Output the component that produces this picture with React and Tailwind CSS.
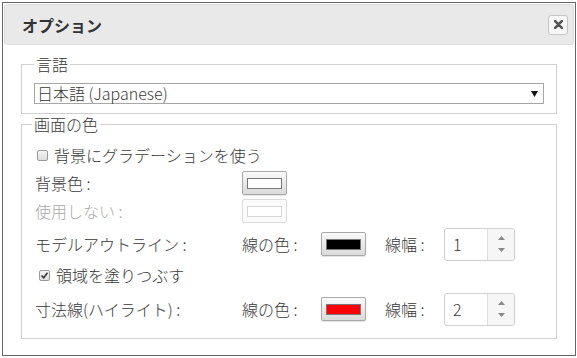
import React from 'react';

const font = { fontFamily: '"Noto Sans CJK JP", "Liberation Sans", sans-serif' };

function Checkbox({ checked }) {
  return (
    <span className="w-[11px] h-[11px] border border-[#9a9a9a] rounded-[2px] bg-linear-to-b from-[#f4f4f4] to-[#dedede] flex items-center justify-center shrink-0">
      {checked && (
        <svg width="9" height="9" viewBox="0 0 9 9">
          <path d="M1.5 4.5 L3.7 6.8 L7.5 1.8" fill="none" stroke="#333" strokeWidth="1.6" />
        </svg>
      )}
    </span>
  );
}

function ColorButton({ color, disabled }) {
  return (
    <button
      type="button"
      className={
        disabled
          ? 'w-[45px] h-[24px] border border-[#dcdcdc] rounded-[2px] bg-[#fbfbfb] flex items-center justify-center'
          : 'w-[45px] h-[24px] border border-[#a9a9a9] rounded-[2px] bg-linear-to-b from-[#fafafa] to-[#dadada] flex items-center justify-center shadow-[0_1px_1px_rgba(0,0,0,0.12)]'
      }
    >
      <span
        className={disabled ? 'w-[35px] h-[11px] border border-[#d6d6d6]' : 'w-[35px] h-[11px] border border-[#777]'}
        style={{ background: color }}
      />
    </button>
  );
}

function Spinner({ value }) {
  return (
    <div className="w-[71px] h-[33px] border border-[#cfcfcf] rounded-[3px] flex bg-white">
      <div className="flex-1 flex items-center pl-[8px] text-[16px]">{value}</div>
      <div className="w-[27px] border-l border-[#dedede] bg-[#f6f6f6] flex flex-col items-center justify-center gap-[8px] rounded-r-[3px]">
        <svg width="7" height="4" viewBox="0 0 7 4"><path d="M0 4 L3.5 0 L7 4 Z" fill="#888" /></svg>
        <svg width="7" height="4" viewBox="0 0 7 4"><path d="M0 0 L3.5 4 L7 0 Z" fill="#888" /></svg>
      </div>
    </div>
  );
}

function LineRow({ label, color, width }) {
  return (
    <div className="h-[34px] flex items-center">
      <span className="w-[207px]">{label}</span>
      <span className="w-[79px]">線の色 :</span>
      <ColorButton color={color} />
      <span className="ml-[19px] w-[59px]">線幅 :</span>
      <Spinner value={width} />
    </div>
  );
}

export default function App() {
  return (
    <div className="w-[577px] h-[358px] bg-white" style={font}>
      <div className="absolute left-[2px] top-[2px] w-[574px] h-[354px] border border-[#666] bg-white">
        <div className="h-[41px] mx-[1px] mt-[1px] bg-[#e9e9e9] border border-[#dddddd] rounded-[3px] flex items-center justify-between pl-[17px] pr-[5px]">
          <span className="text-[16px] font-bold text-[#333] leading-[20px]">オプション</span>
          <button
            type="button"
            className="w-[20px] h-[20px] border border-[#c5c5c5] rounded-[3px] bg-[#f6f6f6] flex items-center justify-center"
          >
            <svg width="9" height="9" viewBox="0 0 9 9">
              <path d="M1.2 1.2 L7.8 7.8 M7.8 1.2 L1.2 7.8" stroke="#555" strokeWidth="2.6" strokeLinecap="round" />
            </svg>
          </button>
        </div>

        <div className="px-[18px] pt-[9px] text-[#383838] text-[16px] leading-[20px] font-light">
          <fieldset className="border border-[#d0d0d0] px-[12px] pt-[9px] pb-[9px]">
            <legend className="px-[2px] leading-[20px]">言語</legend>
            <div className="h-[21px] border border-[#a6a6a6] flex items-center justify-between pl-[2px] pr-[5px]">
              <span className="leading-[19px]">日本語 (Japanese)</span>
              <svg width="7" height="6" viewBox="0 0 7 6"><path d="M0 0 L7 0 L3.5 6 Z" fill="#111" /></svg>
            </div>
          </fieldset>

          <fieldset className="border border-[#d0d0d0] pl-[13px] pr-[12px] pt-[10px] pb-[12px]">
            <legend className="-ml-[3px] px-[2px] leading-[20px]">画面の色</legend>
            <div className="h-[22px] flex items-center gap-[6px] pl-[2px]">
              <Checkbox />
              <span>背景にグラデーションを使う</span>
            </div>
            <div className="h-[26px] mt-[4px] flex items-center">
              <span className="w-[207px]">背景色 :</span>
              <ColorButton color="#ffffff" />
            </div>
            <div className="h-[26px] mt-[2px] flex items-center">
              <span className="w-[207px] text-[#a8a8a8]">使用しない :</span>
              <ColorButton color="#ffffff" disabled />
            </div>
            <div className="mt-[3px]">
              <LineRow label="モデルアウトライン :" color="#000000" width="1" />
            </div>
            <div className="h-[22px] mt-[3px] flex items-center gap-[6px] pl-[4px]">
              <Checkbox checked />
              <span>領域を塗りつぶす</span>
            </div>
            <div className="mt-[6px]">
              <LineRow label="寸法線(ハイライト) :" color="#ff0000" width="2" />
            </div>
          </fieldset>
        </div>
      </div>
    </div>
  );
}
